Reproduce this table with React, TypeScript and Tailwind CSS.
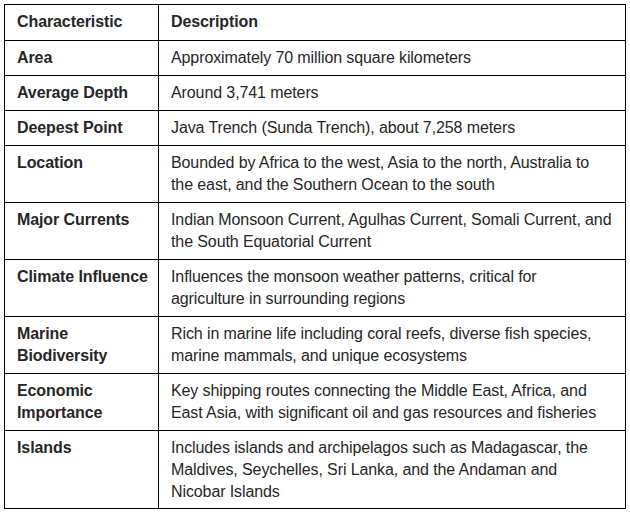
const rows: { name: string[]; desc: string[] }[] = [
  { name: ["Area"], desc: ["Approximately 70 million square kilometers"] },
  { name: ["Average Depth"], desc: ["Around 3,741 meters"] },
  { name: ["Deepest Point"], desc: ["Java Trench (Sunda Trench), about 7,258 meters"] },
  {
    name: ["Location"],
    desc: [
      "Bounded by Africa to the west, Asia to the north, Australia to",
      "the east, and the Southern Ocean to the south",
    ],
  },
  {
    name: ["Major Currents"],
    desc: [
      "Indian Monsoon Current, Agulhas Current, Somali Current, and",
      "the South Equatorial Current",
    ],
  },
  {
    name: ["Climate Influence"],
    desc: [
      "Influences the monsoon weather patterns, critical for",
      "agriculture in surrounding regions",
    ],
  },
  {
    name: ["Marine", "Biodiversity"],
    desc: [
      "Rich in marine life including coral reefs, diverse fish species,",
      "marine mammals, and unique ecosystems",
    ],
  },
  {
    name: ["Economic", "Importance"],
    desc: [
      "Key shipping routes connecting the Middle East, Africa, and",
      "East Asia, with significant oil and gas resources and fisheries",
    ],
  },
  {
    name: ["Islands"],
    desc: [
      "Includes islands and archipelagos such as Madagascar, the",
      "Maldives, Seychelles, Sri Lanka, and the Andaman and",
      "Nicobar Islands",
    ],
  },
];

function Lines({ lines }: { lines: string[] }) {
  return (
    <>
      {lines.map((l, i) => (
        <div key={i} className="whitespace-nowrap">
          {l}
        </div>
      ))}
    </>
  );
}

export default function App() {
  return (
    <div className="min-h-[514px] bg-white pl-[4px] pt-[4px] font-['Liberation_Sans',Arial,sans-serif] text-[16px] leading-[22px] tracking-[-0.1px] text-[#262626]">
      <table className="w-[622px] table-fixed border-collapse border border-black">
        <colgroup>
          <col className="w-[154px]" />
          <col />
        </colgroup>
        <thead>
          <tr>
            <th className="border border-black pl-[12px] pt-[6px] pb-[7px] text-left align-top font-bold">
              Characteristic
            </th>
            <th className="border border-black pl-[12px] pt-[6px] pb-[7px] text-left align-top font-bold">
              Description
            </th>
          </tr>
        </thead>
        <tbody>
          {rows.map((r, i) => {
            const pad = i === rows.length - 1 ? "pt-[6px] pb-[5px]" : "pt-[6px] pb-[6px]";
            return (
              <tr key={r.name.join(" ")}>
                <td className={`border border-black pl-[12px] ${pad} align-top font-bold`}>
                  <Lines lines={r.name} />
                </td>
                <td className={`border border-black pl-[12px] ${pad} align-top`}>
                  <Lines lines={r.desc} />
                </td>
              </tr>
            );
          })}
        </tbody>
      </table>
    </div>
  );
}
